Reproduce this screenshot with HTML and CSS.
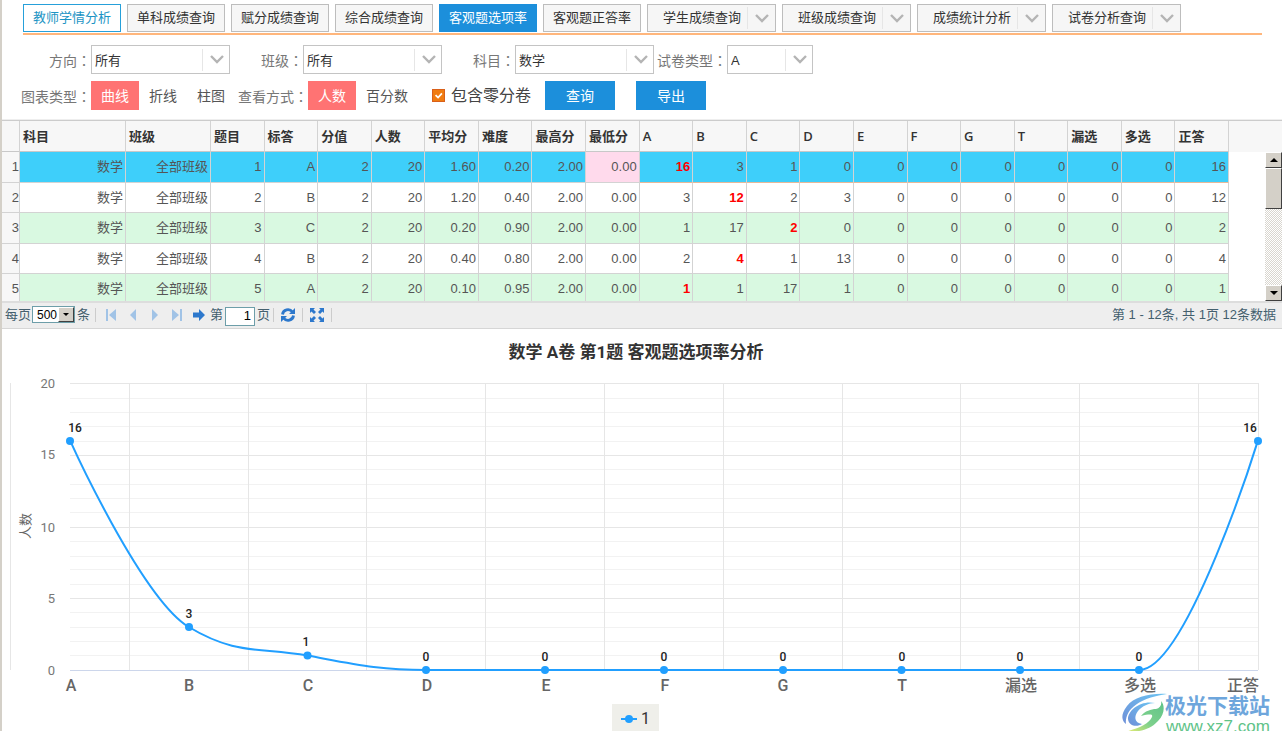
FILE: index.html
```html
<!DOCTYPE html>
<html lang="zh-CN">
<head>
<meta charset="utf-8">
<title>客观题选项率</title>
<link rel="stylesheet" href="styles.css">
</head>
<body>
<svg class="defs" aria-hidden="true">
  <symbol id="chev" viewBox="0 0 14 9"><path d="M1 1l6 6 6-6" fill="none" stroke="#b4b4b4" stroke-width="2.4"/></symbol>
</svg>
<main class="page">
  <div class="top">
    <nav class="tabs">
      <button class="tab tab-outline">教师学情分析</button>
      <button class="tab">单科成绩查询</button>
      <button class="tab">赋分成绩查询</button>
      <button class="tab">综合成绩查询</button>
      <button class="tab tab-active">客观题选项率</button>
      <button class="tab">客观题正答率</button>
      <button class="tab tab-menu"><span>学生成绩查询</span><i class="drop"><svg class="chev"><use href="#chev"/></svg></i></button>
      <button class="tab tab-menu"><span>班级成绩查询</span><i class="drop"><svg class="chev"><use href="#chev"/></svg></i></button>
      <button class="tab tab-menu"><span>成绩统计分析</span><i class="drop"><svg class="chev"><use href="#chev"/></svg></i></button>
      <button class="tab tab-menu"><span>试卷分析查询</span><i class="drop"><svg class="chev"><use href="#chev"/></svg></i></button>
    </nav>
    <form class="filters">
      <div class="line">
        <label class="lab" for="dir">方向：</label>
        <div class="combo"><select id="dir"><option>所有</option></select><i class="drop"><svg class="chev"><use href="#chev"/></svg></i></div>
        <label class="lab" for="cls">班级：</label>
        <div class="combo"><select id="cls"><option>所有</option></select><i class="drop"><svg class="chev"><use href="#chev"/></svg></i></div>
        <label class="lab" for="sub">科目：</label>
        <div class="combo"><select id="sub"><option>数学</option></select><i class="drop"><svg class="chev"><use href="#chev"/></svg></i></div>
        <label class="lab" for="paper">试卷类型：</label>
        <div class="combo combo-small"><select id="paper"><option>A</option></select><i class="drop"><svg class="chev"><use href="#chev"/></svg></i></div>
      </div>
      <div class="line">
        <span class="lab">图表类型：</span>
        <div class="seg">
          <label><input type="radio" name="kind" checked><span>曲线</span></label>
          <label><input type="radio" name="kind"><span>折线</span></label>
          <label><input type="radio" name="kind"><span>柱图</span></label>
        </div>
        <span class="lab">查看方式：</span>
        <div class="seg">
          <label><input type="radio" name="mode" checked><span>人数</span></label>
          <label><input type="radio" name="mode"><span>百分数</span></label>
        </div>
        <label class="check"><span class="box"><input type="checkbox" checked><svg viewBox="0 0 13 13"><path d="M3 6l3 3 4.500-5" fill="none" stroke="#fff" stroke-width="2"/></svg></span>包含零分卷</label>
        <button type="button" class="go">查询</button>
        <button type="button" class="go">导出</button>
      </div>
    </form>
  </div>

  <section class="grid">
    <div class="view">
      <table>
        <colgroup><col class="c-no"><col class="c-sub"><col class="c-cls"><col span="19"><col class="c-fill"></colgroup>
        <thead><tr><th></th><th>科目</th><th>班级</th><th>题目</th><th>标答</th><th>分值</th><th>人数</th><th>平均分</th><th>难度</th><th>最高分</th><th>最低分</th><th>A</th><th>B</th><th>C</th><th>D</th><th>E</th><th>F</th><th>G</th><th>T</th><th>漏选</th><th>多选</th><th>正答</th><th></th></tr></thead>
        <tbody>
          <tr class="sel"><td>1</td><td>数学</td><td>全部班级</td><td>1</td><td>A</td><td>2</td><td>20</td><td>1.60</td><td>0.20</td><td>2.00</td><td class="pink">0.00</td><td><b>16</b></td><td>3</td><td>1</td><td>0</td><td>0</td><td>0</td><td>0</td><td>0</td><td>0</td><td>0</td><td>16</td><td></td></tr>
          <tr><td>2</td><td>数学</td><td>全部班级</td><td>2</td><td>B</td><td>2</td><td>20</td><td>1.20</td><td>0.40</td><td>2.00</td><td>0.00</td><td>3</td><td><b>12</b></td><td>2</td><td>3</td><td>0</td><td>0</td><td>0</td><td>0</td><td>0</td><td>0</td><td>12</td><td></td></tr>
          <tr><td>3</td><td>数学</td><td>全部班级</td><td>3</td><td>C</td><td>2</td><td>20</td><td>0.20</td><td>0.90</td><td>2.00</td><td>0.00</td><td>1</td><td>17</td><td><b>2</b></td><td>0</td><td>0</td><td>0</td><td>0</td><td>0</td><td>0</td><td>0</td><td>2</td><td></td></tr>
          <tr><td>4</td><td>数学</td><td>全部班级</td><td>4</td><td>B</td><td>2</td><td>20</td><td>0.40</td><td>0.80</td><td>2.00</td><td>0.00</td><td>2</td><td><b>4</b></td><td>1</td><td>13</td><td>0</td><td>0</td><td>0</td><td>0</td><td>0</td><td>0</td><td>4</td><td></td></tr>
          <tr><td>5</td><td>数学</td><td>全部班级</td><td>5</td><td>A</td><td>2</td><td>20</td><td>0.10</td><td>0.95</td><td>2.00</td><td>0.00</td><td><b>1</b></td><td>1</td><td>17</td><td>1</td><td>0</td><td>0</td><td>0</td><td>0</td><td>0</td><td>0</td><td>1</td><td></td></tr>
        </tbody>
      </table>
    </div>
    <div class="scroll" aria-hidden="true">
      <span class="sb"><svg viewBox="0 0 8 4"><path d="M0 4l4-4 4 4z"/></svg></span>
      <span class="sb thumb"></span>
      <span class="track"></span>
      <span class="sb"><svg viewBox="0 0 8 4"><path d="M0 0l4 4 4-4z"/></svg></span>
    </div>
  </section>

  <footer class="pager">
    <label for="size">每页</label>
    <div class="size"><select id="size"><option>500</option></select><i class="sb"><svg viewBox="0 0 6 3"><path d="M0 0l3 3 3-3z"/></svg></i></div>
    <span>条</span>
    <i class="sep"></i>
    <button class="ic" aria-label="首页"><svg viewBox="0 0 14 14"><path d="M2 1h2v12H2zM12 1v12L5 7z" fill="#a1c3e6"/></svg></button>
    <button class="ic" aria-label="上一页"><svg viewBox="0 0 14 14"><path d="M10 1v12L4 7z" fill="#a1c3e6"/></svg></button>
    <button class="ic" aria-label="下一页"><svg viewBox="0 0 14 14"><path d="M4 1v12l6-6z" fill="#a1c3e6"/></svg></button>
    <button class="ic" aria-label="末页"><svg viewBox="0 0 14 14"><path d="M2 1v12l7-6zM10 1h2v12h-2z" fill="#a1c3e6"/></svg></button>
    <button class="ic" aria-label="跳转"><svg viewBox="0 0 14 14"><path d="M1 4.500h6V1l6 6-6 6V9.500H1z" fill="#2d78cc"/></svg></button>
    <label for="pg">第</label>
    <input id="pg" class="pg" value="1">
    <span>页</span>
    <i class="sep sep-near"></i>
    <button class="ic" aria-label="刷新"><svg viewBox="0 0 14 14"><g fill="none" stroke="#2d78cc" stroke-width="2.800"><path d="M1.500 6.500C2 1.500 8.500 0 11.500 4"/><path d="M12.500 7.500C12 12.500 5.500 14 2.500 10"/></g><path d="M14 0v6H8zM0 14V8h6z" fill="#2d78cc"/></svg></button>
    <i class="sep sep-near"></i>
    <button class="ic" aria-label="全屏"><svg viewBox="0 0 14 14"><path d="M0 0h5L3.500 1.500 6 4 4 6 1.500 3.500 0 5zM14 0H9l1.500 1.500L8 4l2 2 2.500-2.500L14 5zM0 14h5l-1.500-1.500L6 10 4 8l-2.500 2.500L0 9zM14 14H9l1.500-1.500L8 10l2-2 2.500 2.500L14 9z" fill="#2d78cc"/></svg></button>
    <i class="sep sep-near"></i>
    <span class="total">第 1 - 12条, 共 1页 12条数据</span>
  </footer>

  <svg class="chart" viewBox="2 329 1280 402" role="img" aria-label="客观题选项率分析">
    <defs>
      <linearGradient id="wa" x1="1" y1="0" x2="0" y2="1"><stop offset="0" stop-color="#6cc4f2"/><stop offset="1" stop-color="#6f90d8"/></linearGradient>
      <linearGradient id="wb" x1="1" y1="0" x2="0" y2="1"><stop offset="0" stop-color="#5fc389"/><stop offset=".55" stop-color="#7dd08c"/><stop offset="1" stop-color="#eeee70"/></linearGradient>
    </defs>
    <text class="t-title" x="636" y="358">数学 A卷 第1题 客观题选项率分析</text>
    <path class="minor" d="M70 655.500H1258M70 641.500H1258M70 627.500H1258M70 612.500H1258M70 584.500H1258M70 569.500H1258M70 556.500H1258M70 541.500H1258M70 512.500H1258M70 498.500H1258M70 484.500H1258M70 469.500H1258M70 441.500H1258M70 426.500H1258M70 412.500H1258M70 398.500H1258"/>
    <path class="major" d="M70 598.500H1258M70 527.500H1258M70 455.500H1258M70 383.500H1258M129.500 383V670M248.500 383V670M366.500 383V670M485.500 383V670M604.500 383V670M723.500 383V670M842.500 383V670M960.500 383V670M1079.500 383V670M1198.500 383V670M1258.500 383V670M10.500 383V670"/>
    <path class="base" d="M70 670.500H1258"/>
    <g class="t-y"><text x="55" y="388">20</text><text x="55" y="459">15</text><text x="55" y="532">10</text><text x="55" y="603">5</text><text x="55" y="675">0</text></g>
    <text class="t-axis" transform="translate(30 526) rotate(-90)">人数</text>
    <path class="curve" d="M70 440.400C70 440.400 141.300 598.200 188.800 627C236.300 655.600 260.100 647 307.600 655.600C355.100 664.300 378.900 670 426.400 670H1139.200C1186.700 670 1258 440.400 1258 440.400"/>
    <g class="dots"><circle cx="70" cy="441" r="4"/><circle cx="189" cy="627" r="4"/><circle cx="307.500" cy="655.500" r="4"/><circle cx="426" cy="670" r="4"/><circle cx="545" cy="670" r="4"/><circle cx="664" cy="670" r="4"/><circle cx="783" cy="670" r="4"/><circle cx="901.500" cy="670" r="4"/><circle cx="1020" cy="670" r="4"/><circle cx="1139" cy="670" r="4"/><circle cx="1258" cy="441" r="4"/></g>
    <g class="t-val"><text x="75" y="432">16</text><text x="189" y="618">3</text><text x="306" y="646">1</text><text x="426" y="661">0</text><text x="545" y="661">0</text><text x="664" y="661">0</text><text x="783" y="661">0</text><text x="902" y="661">0</text><text x="1020" y="661">0</text><text x="1139" y="661">0</text><text x="1250" y="432">16</text></g>
    <g class="t-cat"><text x="71" y="691">A</text><text x="189" y="691">B</text><text x="308" y="691">C</text><text x="427" y="691">D</text><text x="546" y="691">E</text><text x="665" y="691">F</text><text x="783" y="691">G</text><text x="902" y="691">T</text><text x="1021" y="691">漏选</text><text x="1140" y="691">多选</text><text x="1243" y="691">正答</text></g>
    <rect x="612" y="704" width="47" height="27" fill="#efefea"/>
    <path class="curve" d="M621 719H637"/><circle cx="629" cy="719" r="4" fill="#219fff"/>
    <text class="t-leg" x="641" y="724">1</text>
    <path fill="url(#wa)" d="M1167 694C1150 693 1134 697 1127 706C1120 715 1122 721 1126 724C1125 712 1134 699 1167 694Z"/>
    <path fill="url(#wa)" d="M1155 703C1141 700 1128 710 1128 719C1129 727 1138 727 1142 724C1134 723 1134 716 1138 711C1142 706 1149 703 1155 703Z"/>
    <path fill="url(#wb)" d="M1161 701C1165 705 1165 714 1158 721C1149 731 1137 732 1125 732C1139 728 1149 724 1152 717C1153 714 1150 714 1141 716C1145 711 1151 709 1156 709C1160 708 1162 705 1161 701Z"/>
    <text class="w-a" x="1165" y="713">极光下载站</text>
    <text class="w-b" x="1166" y="732">www.xz7.com</text>
  </svg>
</main>
</body>
</html>
```
FILE: styles.css
```css
* { box-sizing: border-box; }
body {
  margin: 0;
  background: #fff;
  font: 13px/20px "Liberation Sans", "Noto Sans CJK SC", sans-serif;
  color: #333;
}
button, select, input { font: inherit; color: inherit; margin: 0; border-radius: 0; }
button { padding: 0; border: 0; background: none; }
svg { display: block; }
.defs { display: none; }
.page { border-left: 2px solid #d4d0c8; }

.top { padding: 4px 20px 9px 21px; border-bottom: 1px solid #eee; }
.tabs { display: flex; gap: 6px; padding-bottom: 1px; border-bottom: 2px solid #ffb67c; }
.tab {
  flex: none;
  height: 28px;
  min-width: 98px;
  line-height: 26px;
  border: 1px solid #bdbdbd;
  background: #f6f6f6;
  white-space: nowrap;
}
.tab-outline { background: #fff; border-color: #26a0da; color: #1c94c4; }
.tab-active { background: #1c8fdb; border-color: #1c8fdb; color: #fff; }
.tab-menu { display: flex; align-items: center; justify-content: space-between; width: 129px; padding-left: 15px; }
.drop { display: grid; place-items: center; width: 28px; height: 22px; border-left: 1px solid #e6e6e6; }
.chev { width: 14px; height: 9px; }

.filters { display: flex; flex-direction: column; gap: 7px; padding-top: 10px; }
.line { display: flex; align-items: center; height: 29px; }
.lab {
  display: flex;
  justify-content: flex-end;
  width: 73px;
  font: 14px/20px "Noto Sans CJK TC", sans-serif;
  font-feature-settings: "locl" 0;
  color: #777;
  white-space: nowrap;
}
.lab:first-child { width: 68px; }
.combo { display: grid; align-items: center; width: 139px; height: 29px; }
.combo > * { grid-area: 1 / 1; }
.combo-small { width: 86px; }
.combo select {
  appearance: none;
  width: 100%;
  height: 29px;
  padding: 2px 3px 0;
  border: 1px solid #c4c4c4;
  background: #fff;
}
.combo .drop { justify-self: end; pointer-events: none; }
.seg { display: flex; font-size: 14px; color: #555; }
.seg label { display: flex; }
.seg input { appearance: none; width: 0; height: 0; }
.seg span { padding: 0 10px; line-height: 30px; height: 29px; }
.seg :checked + span { background: #ff7373; color: #fff; }
.check { display: flex; align-items: center; gap: 6px; margin: 0 14px 0 14px; font-size: 16px; color: #444; }
.box { display: grid; width: 13px; height: 13px; background: #f07c10; border: 1px solid #d9601a; }
.box > * { grid-area: 1 / 1; width: 11px; height: 11px; margin: 0; }
.box input { appearance: none; }
.go { width: 70px; height: 29px; margin-right: 21px; background: #1c8fdb; color: #fff; font-size: 14px; }

.grid { display: flex; height: 181px; border-top: 1px solid #ccc; }
.view { flex: 1; overflow: hidden; }
table { width: 100%; table-layout: fixed; border-collapse: separate; border-spacing: 0; }
.c-no { width: 18px; }
.c-sub { width: 106px; }
.c-cls { width: 85px; }
.c-fill { width: 36px; }
th, td { padding: 0 3px; border: 0 solid #d3d3d3; border-width: 0 1px 1px 0; white-space: nowrap; overflow: hidden; }
th { height: 31px; background: #f7f7f7; text-align: left; font-family: "Open Sans", "Noto Sans CJK SC", sans-serif; font-weight: 600; color: #333; border-bottom-color: #c8c8c8; }
td { height: 30px; padding: 0 2px; text-align: right; color: #555; line-height: 18px; }
tbody tr:nth-child(odd) td { height: 31px; background: #d9f9e1; }
tbody tr.sel:nth-child(odd) td { background: #3ecffa; }
tbody tr.sel:nth-child(odd) td.pink { background: #ffdaec; }
tbody tr:nth-child(n) td:first-child { padding: 0; background: #f7f7f7; }
.sel .pink ~ td { border-bottom-color: #e8b898; }
tbody tr:nth-child(n) td:last-child { background: #fff; border: 0; }
th:last-child { border: 0; }
td b { color: #f00; }
.scroll { display: flex; flex-direction: column; width: 17px; border-top: 31px solid #f7f7f7; }
.sb {
  display: grid;
  place-items: center;
  height: 16px;
  background: #d4d0c8;
  border: 1px solid;
  border-color: #fff #404040 #404040 #fff;
}
.sb svg { width: 8px; height: 4px; }
.thumb { height: 41px; }
.track { flex: 1; background: repeating-conic-gradient(#d9d6cf 0 25%, #fff 0 50%) 0 0 / 2px 2px; }

.pager {
  display: flex;
  align-items: center;
  height: 28px;
  padding: 0 6px 2px 3px;
  background: #eee;
  border-top: 2px solid #ddd;
  border-bottom: 1px solid #d6d6d6;
  color: #44606e;
}
.size { display: grid; align-items: center; width: 43px; height: 17px; margin: 0 2px 0 1px; }
.size > * { grid-area: 1 / 1; }
.size select { appearance: none; width: 43px; height: 17px; padding: 0 4px; border: 1px solid #6d9ea9; background: #fff; color: #000; font-size: 12px; line-height: 14px; }
.size .sb { justify-self: end; width: 16px; height: 15px; margin-right: 1px; pointer-events: none; }
.size .sb svg { width: 6px; height: 3px; }
.sep { width: 1px; height: 14px; margin: 0 4px 0 5px; background: #ccc; }
.ic { display: grid; place-items: center; width: 22px; height: 22px; }
.ic svg { width: 14px; height: 14px; }
.pg { width: 30px; height: 19px; margin: 3px 2px 0; padding: 0 3px; border: 1px solid #6d9ea9; text-align: right; color: #000; background: #fff; }
.sep-near { margin: 0 3px; }
.total { margin-left: auto; }

.chart { width: 100%; height: auto; overflow: visible; }
.chart text { font-family: "Liberation Sans Narrow", "Roboto", "Noto Sans CJK SC", sans-serif; text-anchor: middle; }
.minor { stroke: #f2f2f2; }
.major { stroke: #e6e6e6; }
.base { stroke: #ccd6eb; }
.curve { fill: none; stroke: #219fff; stroke-width: 2; }
.dots { fill: #219fff; }
.chart .t-title { font-size: 17px; font-weight: 700; fill: #333; }
.chart .t-y text { font-size: 13px; fill: #777; text-anchor: end; }
.chart .t-axis { font-size: 13px; fill: #666; }
.t-val { font-size: 12px; font-weight: 500; fill: #222; }
.t-cat { font-size: 16px; font-weight: 500; fill: #666; }
.chart .t-cat text { font-family: "Roboto", "Noto Sans CJK SC", sans-serif; }
.chart .t-leg { font-size: 16px; fill: #333; text-anchor: start; }
.chart .w-a { font-family: "Noto Sans CJK SC", sans-serif; font-size: 21px; font-weight: 700; fill: #6ea6dc; text-anchor: start; }
.chart .w-b { font-family: "Liberation Sans", sans-serif; font-size: 17px; fill: #5fc389; text-anchor: start; }
```
